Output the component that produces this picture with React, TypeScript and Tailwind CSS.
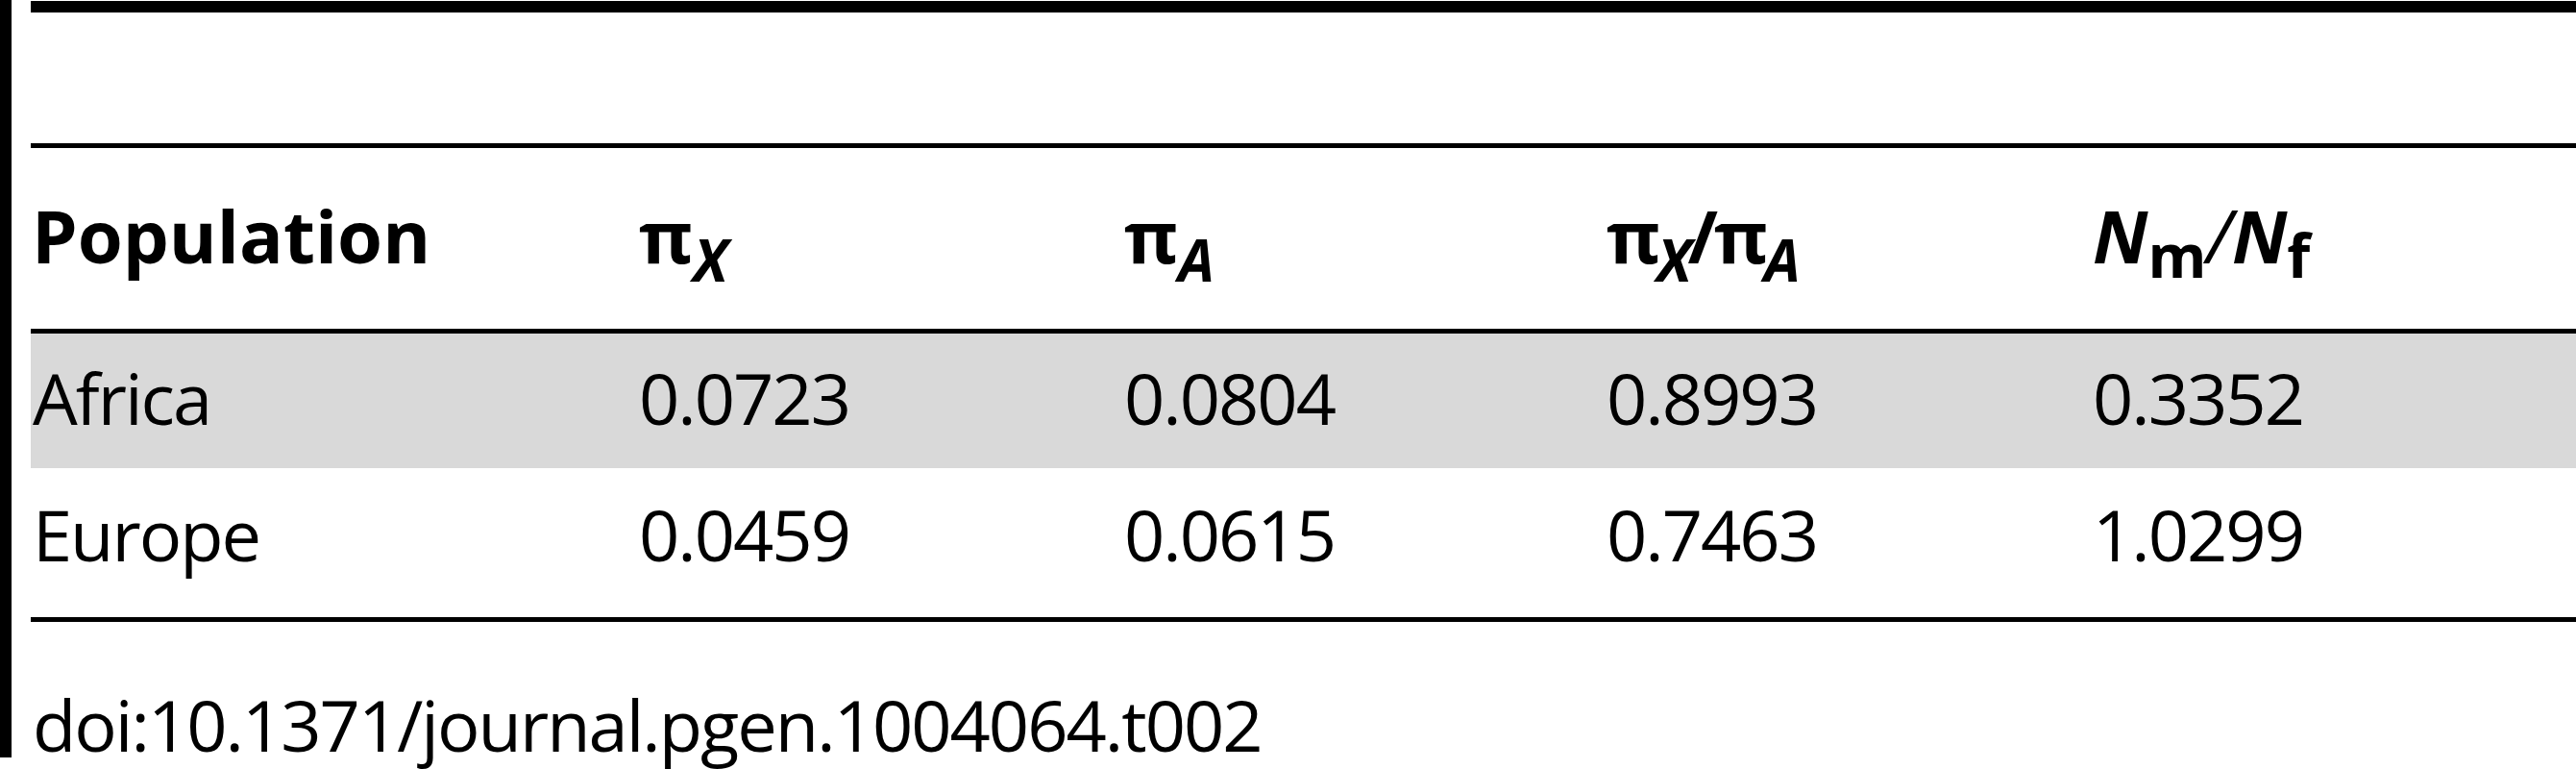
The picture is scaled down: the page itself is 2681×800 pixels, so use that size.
const rows = [
  { name: "Africa", values: ["0.0723", "0.0804", "0.8993", "0.3352"], shaded: true },
  { name: "Europe", values: ["0.0459", "0.0615", "0.7463", "1.0299"], shaded: false },
];

function Sub({ children, italic = false }: { children: React.ReactNode; italic?: boolean }) {
  return (
    <span className={`text-[60px] leading-none align-[-19px] ${italic ? "italic" : ""}`}>
      {children}
    </span>
  );
}

export default function App() {
  return (
    <div className="flex w-[2681px] h-[800px] bg-white text-black font-['Open_Sans',sans-serif]">
      {/* left rule */}
      <div className="w-[12px] h-[788px] bg-black shrink-0" />

      <div className="flex flex-col flex-1 ml-[20px]">
        {/* top rule + empty caption row */}
        <div className="mt-[1px] h-[12px] bg-black" />
        <div className="h-[136px]" />
        <div className="h-[5px] bg-black" />

        {/* header */}
        <div className="grid grid-cols-[633px_505px_502px_506px_1fr] h-[188px] pt-[53px] text-[76px] leading-none font-bold">
          <div className="pl-[1px]">Population</div>
          <div>
            π<Sub italic>X</Sub>
          </div>
          <div>
            π<Sub italic>A</Sub>
          </div>
          <div className="tracking-[-4px]">
            π<Sub italic>X</Sub>/π<Sub italic>A</Sub>
          </div>
          <div>
            <span className="italic">N</span>
            <span className="text-[62px] align-[-15px]">m</span>
            <span className="font-normal italic">/</span>
            <span className="italic">N</span>
            <span className="text-[62px] align-[-15px]">f</span>
          </div>
        </div>
        <div className="h-[5px] bg-black" />

        {/* body */}
        {rows.map((row) => (
          <div
            key={row.name}
            className={`grid grid-cols-[633px_505px_502px_506px_1fr] text-[74px] leading-none tracking-[-2px] ${
              row.shaded ? "bg-[#d9d9d9] h-[140px] pt-[30px]" : "h-[155px] pt-[32px]"
            }`}
          >
            <div className="pl-[2px]">{row.name}</div>
            {row.values.map((v, i) => (
              <div key={i}>{v}</div>
            ))}
          </div>
        ))}
        <div className="h-[5px] bg-black" />

        {/* footer */}
        <div className="mt-[70px] pl-[2px] text-[74px] leading-none tracking-[-2px]">
          doi:10.1371/journal.pgen.1004064.t002
        </div>
      </div>
    </div>
  );
}
